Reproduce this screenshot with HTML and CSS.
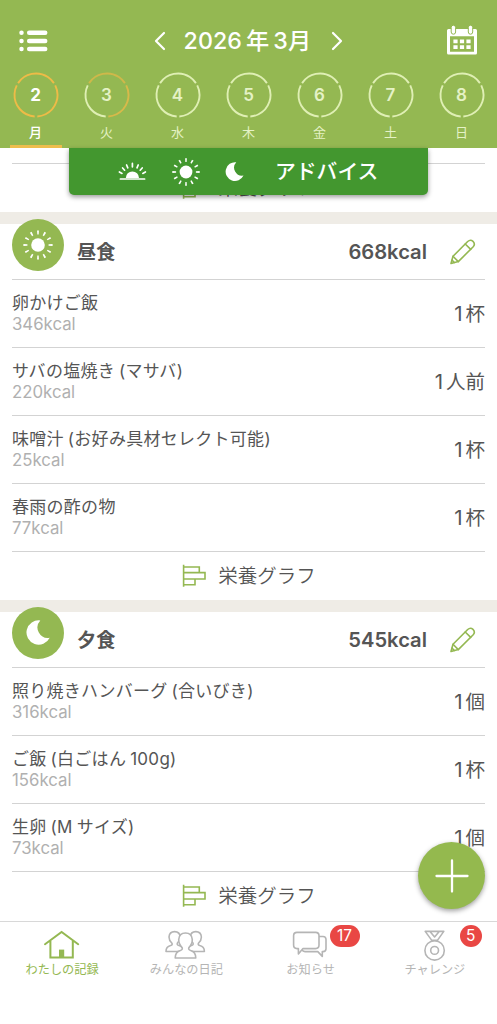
FILE: index.html
```html
<!DOCTYPE html>
<html lang="ja">
<head>
<meta charset="utf-8">
<title>わたしの記録</title>
<link rel="stylesheet" href="styles.css">
</head>
<body>
<svg class="defs" aria-hidden="true">
  <symbol id="ring" viewBox="0 0 46 46">
    <g fill="none" stroke-width="1.9">
      <circle class="arc-top" cx="23" cy="23" r="21.5" pathLength="360" stroke-dasharray="113 247" transform="rotate(-146.5 23 23)"/>
      <circle class="arc-right" cx="23" cy="23" r="21.5" pathLength="360" stroke-dasharray="113 247" transform="rotate(-26.5 23 23)"/>
      <circle class="arc-left" cx="23" cy="23" r="21.5" pathLength="360" stroke-dasharray="113 247" transform="rotate(93.5 23 23)"/>
    </g>
  </symbol>
  <symbol id="sun" viewBox="0 0 30 30">
    <circle cx="15" cy="15" r="6.4" fill="#fff"/>
    <circle cx="15" cy="15" r="11.8" fill="none" stroke="#fff" stroke-width="3.8" pathLength="120" stroke-dasharray="2.6 7.4" stroke-dashoffset="1.3"/>
  </symbol>
  <symbol id="moon" viewBox="0 0 24 26">
    <path d="M14.3 .4A12.2 12.2 0 1 0 23.7 17.7A10.4 10.4 0 0 1 14.3 .4Z" fill="#fff"/>
  </symbol>
  <symbol id="pencil" viewBox="0 0 26 26">
    <g fill="none" stroke="#94b852" stroke-width="1.6" stroke-linejoin="round" stroke-linecap="round">
      <path d="M1 24.5L3 17.3L17.7 2.5Q20.5 0 23 2.4Q25.6 5 23.2 7.8L8.3 22.6Z"/>
      <path d="M3 17.3L8.3 22.6M15.2 5L20.7 10.4M2 21.2L4.4 23.5"/>
    </g>
  </symbol>
  <symbol id="graph" viewBox="0 0 24 24">
    <path d="M1.6 .8V22.8M1.6 3H17.3V8.6M1.6 8.6H23V15H1.6M13 15V20.8H1.6" fill="none" stroke="#94b852" stroke-width="1.6"/>
  </symbol>
</svg>

<header class="header">
  <div class="topbar">
    <svg class="menu" viewBox="0 0 30 24"><g stroke="#fff" stroke-linecap="round" stroke-width="4.5"><path d="M11.2 3.8H27.2M11.2 11.9H27.2M11.2 20.1H27.2M3.5 3.8H3.51M3.5 11.9H3.51M3.5 20.1H3.51"/></g></svg>
    <div class="month">
      <svg class="chev" viewBox="0 0 12 20"><path d="M10 2L2 10L10 18"/></svg>
      <div class="month-text">2026<span class="sp">年</span><span class="sp">3</span>月</div>
      <svg class="chev" viewBox="0 0 12 20"><path d="M2 2L10 10L2 18"/></svg>
    </div>
    <svg class="calendar" viewBox="0 0 30 30">
      <path fill="#fff" fill-rule="evenodd" d="M1.5 4H28.5Q30 4 30 5.5V28Q30 29.5 28.5 29.5H1.5Q0 29.5 0 28V5.5Q0 4 1.5 4ZM3 11.2V26.8H27V11.2Z"/>
      <path fill="#fff" d="M6.4 14.5h4.2v3.8H6.4zM12.9 14.5h4.2v3.8h-4.2zM19.4 14.5h4.2v3.8h-4.2zM6.4 20.3h4.2v3.8H6.4zM12.9 20.3h4.2v3.8h-4.2zM19.4 20.3h4.2v3.8h-4.2z"/>
      <g fill="#fff" stroke="#94b852"><rect x="4.2" y=".2" width="4.4" height="9" rx="2.2"/><rect x="21.3" y=".2" width="4.4" height="9" rx="2.2"/></g>
    </svg>
  </div>
  <div class="week">
    <div class="day selected"><div class="dial"><svg><use href="#ring"/></svg><b>2</b></div><span>月</span></div>
    <div class="day partial"><div class="dial"><svg><use href="#ring"/></svg><b>3</b></div><span>火</span></div>
    <div class="day"><div class="dial"><svg><use href="#ring"/></svg><b>4</b></div><span>水</span></div>
    <div class="day"><div class="dial"><svg><use href="#ring"/></svg><b>5</b></div><span>木</span></div>
    <div class="day"><div class="dial"><svg><use href="#ring"/></svg><b>6</b></div><span>金</span></div>
    <div class="day"><div class="dial"><svg><use href="#ring"/></svg><b>7</b></div><span>土</span></div>
    <div class="day"><div class="dial"><svg><use href="#ring"/></svg><b>8</b></div><span>日</span></div>
  </div>
  <div class="advice">
    <svg class="sunrise" viewBox="0 0 30 20"><path d="M7.8 16A6.6 6.6 0 0 1 21 16Z" fill="#fff"/><path d="M2.4 17H26.6M14.4 1.4V4.8M8.6 3L9.8 5.8M20.2 3L19 5.8M4.6 6L6.6 8.2M24.2 6L22.2 8.2M1.4 10L4 11.4M27.4 10L24.8 11.4" stroke="#fff" stroke-width="1.7" stroke-linecap="round"/></svg>
    <svg class="sun"><use href="#sun"/></svg>
    <svg class="moon"><use href="#moon"/></svg>
    <span>アドバイス</span>
  </div>
</header>

<main class="content">
  <section class="previous"><div class="graph"><svg><use href="#graph"/></svg><span>栄養グラフ</span></div></section>

  <section class="meal">
    <div class="meal-head"><div class="badge-icon"><svg class="sun-lg"><use href="#sun"/></svg></div><h2>昼食</h2><strong>668kcal</strong><svg class="pencil"><use href="#pencil"/></svg></div>
    <div class="row"><div class="food"><p>卵かけご飯</p><small>346kcal</small></div><div class="qty">1<i>杯</i></div></div>
    <div class="row"><div class="food"><p>サバの塩焼き<span class="sp">(マサバ)</span></p><small>220kcal</small></div><div class="qty">1<i>人前</i></div></div>
    <div class="row"><div class="food"><p>味噌汁<span class="sp">(お好み具材セレクト可能)</span></p><small>25kcal</small></div><div class="qty">1<i>杯</i></div></div>
    <div class="row"><div class="food"><p>春雨の酢の物</p><small>77kcal</small></div><div class="qty">1<i>杯</i></div></div>
    <div class="graph"><svg><use href="#graph"/></svg><span>栄養グラフ</span></div>
  </section>

  <section class="meal">
    <div class="meal-head"><div class="badge-icon"><svg class="moon-lg"><use href="#moon"/></svg></div><h2>夕食</h2><strong>545kcal</strong><svg class="pencil"><use href="#pencil"/></svg></div>
    <div class="row"><div class="food"><p>照り焼きハンバーグ<span class="sp">(合いびき)</span></p><small>316kcal</small></div><div class="qty">1<i>個</i></div></div>
    <div class="row"><div class="food"><p>ご飯<span class="sp">(白ごはん</span><span class="sp">100g)</span></p><small>156kcal</small></div><div class="qty">1<i>杯</i></div></div>
    <div class="row"><div class="food"><p>生卵<span class="sp">(M</span><span class="sp">サイズ)</span></p><small>73kcal</small></div><div class="qty">1<i>個</i></div></div>
    <div class="graph"><svg><use href="#graph"/></svg><span>栄養グラフ</span></div>
  </section>
</main>

<button class="fab" aria-label="追加"><svg viewBox="0 0 34 34"><path d="M17 1.5V32.5M1.5 17H32.5" stroke="#fff" stroke-width="2.3" stroke-linecap="round"/></svg></button>

<nav class="tabs">
  <div class="tab active">
    <svg viewBox="0 0 40 30"><path d="M3 14.2L19.6 2L36.2 14.2M8.4 11V27.4H30.8V11" fill="none" stroke="currentColor" stroke-width="2" stroke-linecap="round"/><path d="M17 19.6H22.2V27.4H17Z" fill="currentColor"/></svg>
    <span>わたしの記録</span>
  </div>
  <div class="tab">
    <svg viewBox="0 0 40 30"><g fill="#fff" stroke="currentColor" stroke-width="1.6" stroke-linejoin="round"><path d="M0 21.5Q0 16.8 4.6 15.6Q7 14.8 5.8 13Q3 10.4 3 7Q3.4 1.6 8.6 1.6Q13.8 1.6 14.2 7Q14.2 10.2 11.4 13Q10.6 14.8 13 15.6Q17.6 16.8 17.6 21.5Z"/><path d="M38.4 21.5Q38.4 16.8 33.8 15.6Q31.4 14.8 32.6 13Q35.4 10.4 35.4 7Q35 1.6 29.8 1.6Q24.6 1.6 24.2 7Q24.2 10.2 27 13Q27.8 14.8 25.4 15.6Q20.8 16.8 20.8 21.5Z"/><path d="M9.2 28Q9.3 21.9 14.3 20.5Q17 19.6 16.1 17.6Q12.7 14.4 12.7 9.6Q13.2 3 19.5 3Q25.8 3 26.3 9.6Q26.3 14.4 22.9 17.6Q22 19.6 24.7 20.5Q29.7 21.9 29.8 28Z"/></g></svg>
    <span>みんなの日記</span>
  </div>
  <div class="tab">
    <svg viewBox="0 0 40 30"><g fill="#fff" stroke="currentColor" stroke-width="1.6" stroke-linejoin="round"><path d="M14 6.5H32Q35 6.5 35 9.5V18.8Q35 21.6 32 21.6H31.3V26.4L26.8 21.6H14Q11 21.6 11 18.6V9.5Q11 6.5 14 6.5Z"/><path d="M6 2.4H24.6Q28 2.4 28 5.8V15Q28 18.6 24.6 18.6H12L7.4 24V18.6H6Q2.6 18.6 2.6 15V5.8Q2.6 2.4 6 2.4Z"/></g></svg>
    <span>お知らせ</span><em class="count wide">17</em>
  </div>
  <div class="tab">
    <svg class="medal" viewBox="0 0 40 30"><g fill="none" stroke="currentColor" stroke-width="1.6" stroke-linejoin="round"><path d="M10.2 1.4H15L19.6 7L24.2 1.4H28.8L22.4 10.4H16.8ZM15 1.4H24.2"/><circle cx="19.6" cy="20.4" r="9.7"/><circle cx="19.6" cy="20.4" r="3.9"/></g></svg>
    <span>チャレンジ</span><em class="count">5</em>
  </div>
</nav>
</body>
</html>
```
FILE: styles.css
```css
* { box-sizing: border-box; }

body {
  margin: 0;
  width: 497px;
  height: 1024px;
  overflow: hidden;
  position: relative;
  display: flex;
  flex-direction: column;
  background: #fff;
  color: #555;
  font-family: Inter, "Noto Sans CJK JP", sans-serif;
}

.defs { position: absolute; width: 0; height: 0; }
svg { display: block; flex: none; }
p, h2 { margin: 0; }
i, em { font-style: normal; }
.sp { margin-left: 4px; }

/* Header */
.header {
  position: relative;
  z-index: 2;
  flex: none;
  height: 148px;
  background: #94b852;
  color: #fff;
}

.topbar {
  height: 72px;
  padding: 10px 20px 0 18px;
  display: flex;
  align-items: center;
  justify-content: space-between;
}

.menu { width: 30px; height: 24px; margin-top: -1px; }
.month { display: flex; align-items: center; margin-left: 1px; }
.month-text { width: 129px; margin: 0 18px; font-size: 23.2px; line-height: 30px; font-weight: 500; white-space: nowrap; letter-spacing: .1px; }
.chev { width: 12px; height: 20px; fill: none; stroke: #fff; stroke-width: 2.2; stroke-linecap: round; stroke-linejoin: round; }
.calendar { width: 30px; height: 30px; margin-top: -3px; overflow: visible; }

.week { display: grid; grid-template-columns: repeat(7, 71px); height: 76px; }

.day {
  --top: #dfefb4;
  --right: #dfefb4;
  --left: #dfefb4;
  display: flex;
  flex-direction: column;
  align-items: center;
  color: #e5f2c6;
  font-size: 13px;
  line-height: 18px;
}

.arc-top { stroke: var(--top); }
.arc-right { stroke: var(--right); }
.arc-left { stroke: var(--left); }
.day.selected { --top: #eebb47; --right: #eebb47; --left: #eebb47; color: #fff; }
.day.partial { --top: #cfb84a; --right: #d8b94a; }
.day.selected > span { font-weight: 500; }
.day.selected::after { content: ""; width: 52px; height: 3px; margin-top: 4px; background: #edbd4c; }
.day > span { margin-top: 5px; }

.dial { display: grid; place-items: center; width: 46px; height: 46px; }
.dial > * { grid-area: 1 / 1; }
.dial svg { width: 46px; height: 46px; }
.dial b { font-size: 17px; line-height: 20px; font-weight: 600; }
.selected .dial b { font-weight: 700; }

.advice {
  position: absolute;
  left: 69px;
  top: 148px;
  width: 359px;
  height: 47px;
  padding: 0 48px 0 49px;
  display: flex;
  align-items: center;
  border-radius: 0 0 5px 5px;
  background: #43972f;
  box-shadow: 0 2px 5px rgba(0, 0, 0, .4);
}

.sunrise { width: 30px; height: 20px; }
.sun { width: 30px; height: 30px; margin-left: 23px; }
.moon { width: 19px; height: 20px; margin-left: 24px; }
.advice span { margin-left: 31px; font-size: 20.8px; line-height: 30px; font-weight: 500; white-space: nowrap; }

/* Meals */
.content { height: 773px; flex: none; overflow: hidden; }
.previous { padding: 15px 12px 0; }
.meal { border-top: 12px solid #efece6; padding: 0 12px; }

.meal-head { display: flex; align-items: flex-start; height: 55px; }
.badge-icon { display: grid; place-items: center; width: 52px; height: 52px; margin-top: -5px; border-radius: 50%; background: #94b852; flex: none; }
.sun-lg { width: 32px; height: 32px; }
.moon-lg { width: 24px; height: 26px; }
.meal-head h2 { margin: 14px 0 0 13px; font-size: 19.2px; line-height: 28px; font-weight: 700; }
.meal-head strong { margin: 14px 0 0 auto; font-size: 20.2px; line-height: 28px; font-weight: 600; }
.pencil { width: 26px; height: 26px; margin: 15px 9px 0 23px; }

.row {
  height: 68px;
  display: flex;
  justify-content: space-between;
  align-items: center;
  border-top: 1px solid #d3d3d3;
}

.food p { font-size: 17px; line-height: 22px; letter-spacing: .28px; white-space: nowrap; }
.food small { display: block; font-size: 16.8px; line-height: 21px; color: #b0b0b0; }
.qty { font-size: 20.5px; line-height: 28px; }
.qty i { font-size: 19.5px; margin-left: 3px; }

.graph {
  height: 49px;
  display: flex;
  align-items: center;
  justify-content: center;
  gap: 12px;
  padding-left: 1px;
  border-top: 1px solid #d3d3d3;
}

.graph svg { width: 24px; height: 24px; }
.graph span { font-size: 19.5px; line-height: 28px; font-weight: 350; white-space: nowrap; }

/* Floating button */
.fab {
  position: absolute;
  z-index: 3;
  left: 418px;
  top: 842px;
  width: 67px;
  height: 67px;
  padding: 0;
  display: grid;
  place-items: center;
  border: 0;
  border-radius: 50%;
  background: #94b94e;
  box-shadow: 0 2px 5px rgba(0, 0, 0, .38);
}

.fab svg { width: 34px; height: 34px; }

/* Tabs */
.tabs {
  height: 103px;
  flex: none;
  display: grid;
  grid-template-columns: repeat(4, 1fr);
  border-top: 1px solid #d8d8d8;
  background: #fff;
}

.tab { position: relative; display: flex; flex-direction: column; align-items: center; padding-top: 8px; color: #b5b5b5; }
.tab.active { color: #94b852; }
.tab svg { width: 40px; height: 30px; overflow: visible; }
.tab > span { margin-top: 1px; font-size: 12.2px; line-height: 18px; white-space: nowrap; }

.count {
  position: absolute;
  left: 87px;
  top: 3px;
  width: 22px;
  height: 22px;
  border-radius: 11px;
  background: #e94744;
  color: #fff;
  font-size: 15.5px;
  line-height: 22px;
  text-align: center;
}

.count.wide { left: 81px; width: 30px; }
```
